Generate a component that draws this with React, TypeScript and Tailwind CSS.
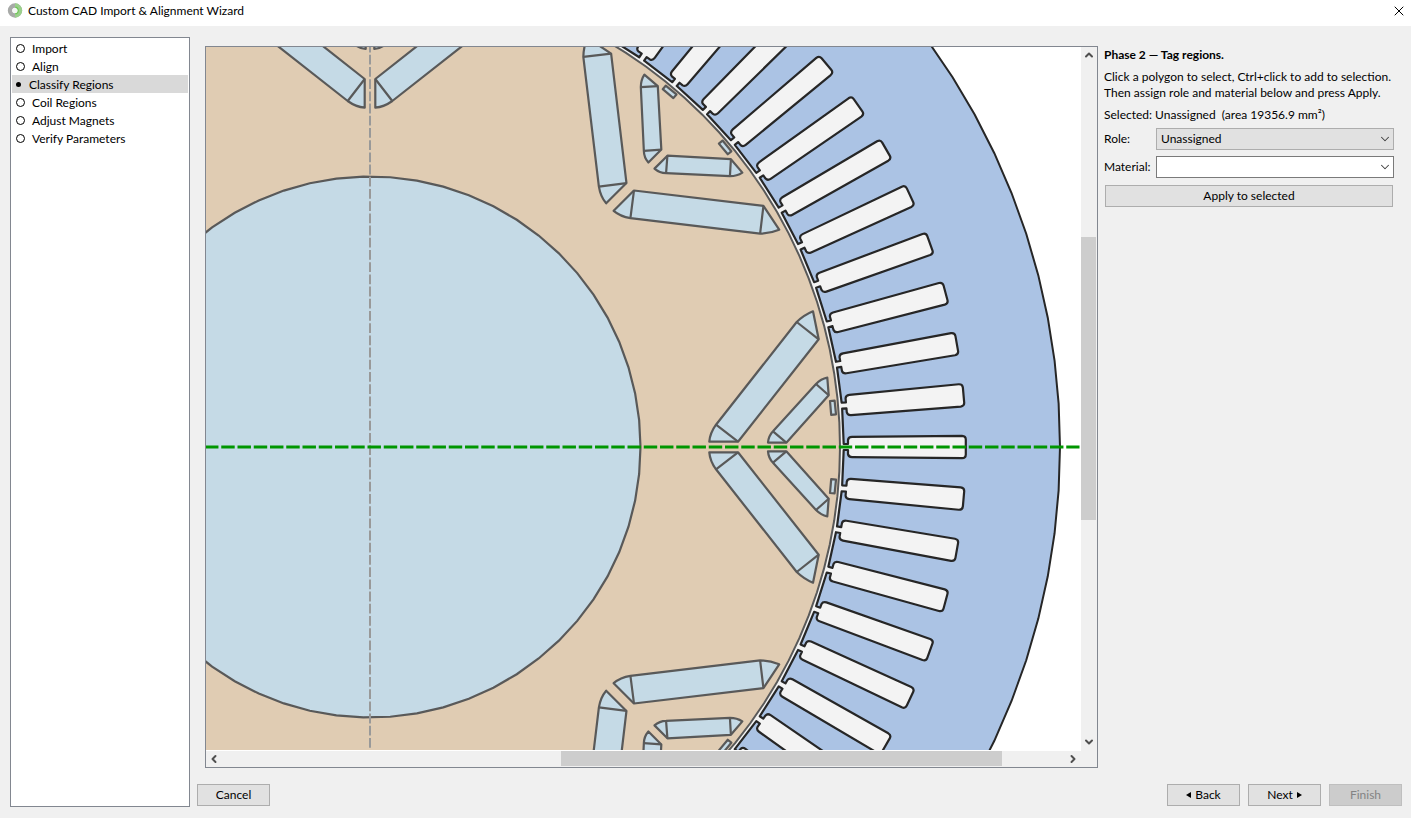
import React from 'react';
import { ChevronDown, ChevronLeft, ChevronRight, ChevronUp, X } from 'lucide-react';

const STEPS = ['Import', 'Align', 'Classify Regions', 'Coil Regions', 'Adjust Magnets', 'Verify Parameters'];
const ACTIVE_STEP = 2;

const SLOT_COUNT = 72;
const POLE_COUNT = 8;

const LARGE_MAGNET = {
  outline: 'M339.3 -5.3 L368 -5.3 L448.7 -107.7 L443 -135.7 Q434 -132 426.7 -125 L346 -22.3 Q340 -14 339.3 -5.3 Z',
  seams: 'M368 -5.3 L346 -22.3 M448.7 -107.7 L426.7 -125'
};

const SMALL_MAGNET = {
  outline: 'M398 -4.3 L416.3 -4.3 L458.7 -51.7 L457.3 -69.3 Q451 -68 446 -63 L403 -15.7 Q398.5 -11 398 -4.3 Z',
  seams: 'M416.3 -4.3 L403 -15.7 M458.7 -51.7 L446 -63'
};

const NOTCH = 'M460 -46 L464.6 -46.4 L466 -32.6 L461.2 -32.2 Z';

const polar = (radius: number, degrees: number) => {
  const angle = (degrees * Math.PI) / 180;
  return [radius * Math.cos(angle), -radius * Math.sin(angle)] as const;
};

const ring = (radius: number, segments: number) =>
  Array.from({ length: segments }, (_, i) => polar(radius, (i * 360) / segments).join(',')).join(' ');

const range = (count: number) => Array.from({ length: count }, (_, i) => i);

// Bore of the stator with every slot cut into it, as one closed outline.
const buildBorePath = () => {
  const place = (x: number, y: number, degrees: number) => {
    const a = (degrees * Math.PI) / 180;
    return `${(x * Math.cos(a) - y * Math.sin(a)).toFixed(2)} ${(x * Math.sin(a) + y * Math.cos(a)).toFixed(2)}`;
  };
  const parts = range(SLOT_COUNT).map((i) => {
    const d = (i * 360) / SLOT_COUNT;
    const p = (x: number, y: number) => place(x, y, d);
    return [
      `${i === 0 ? 'M' : 'L'}${p(473.7, -3)}`,
      `L${p(478, -3)}`,
      `L${p(478, -7)}`,
      `Q${p(478.4, -10)} ${p(482, -10.1)}`,
      `L${p(592, -11.2)}`,
      `Q${p(595.8, -11)} ${p(595.8, -7.5)}`,
      `L${p(595.8, 7.5)}`,
      `Q${p(595.8, 11)} ${p(592, 11.2)}`,
      `L${p(482, 10.1)}`,
      `Q${p(478.4, 10)} ${p(478, 7)}`,
      `L${p(478, 3)}`,
      `L${p(473.7, 3)}`
    ].join(' ');
  });
  return `${parts.join(' ')} Z`;
};

const BORE_PATH = buildBorePath();

const PoleHalf: React.FC<{ mirrored?: boolean }> = ({ mirrored = false }) => (
  <g transform={mirrored ? 'scale(1 -1)' : undefined} fill="#c5dae6" stroke="#595959" strokeWidth="2.2" strokeLinejoin="round">
    <path d={LARGE_MAGNET.outline} />
    <path d={LARGE_MAGNET.seams} />
    <path d={SMALL_MAGNET.outline} />
    <path d={SMALL_MAGNET.seams} />
    <path d={NOTCH} />
  </g>
);

const MotorDrawing: React.FC = () => (
  <svg className="block h-full w-full" viewBox="206 47 875 703" preserveAspectRatio="xMinYMin slice" role="img">
    <rect x="0" y="0" width="2400" height="1800" fill="#ffffff" />
    <g transform="translate(370 447)">
      <polygon points={ring(690, 100)} fill="#abc3e4" stroke="#262626" strokeWidth="2" />
      <path d={BORE_PATH} fill="#f3f3f3" stroke="#262626" strokeWidth="2.2" strokeLinejoin="round" />
      <polygon points={ring(470, 120)} fill="#e0ccb3" stroke="#595959" strokeWidth="2" />
      {range(POLE_COUNT).map((pole) => (
        <g key={pole} transform={`rotate(${(pole * 360) / POLE_COUNT})`}>
          <PoleHalf />
          <PoleHalf mirrored />
        </g>
      ))}
      <polygon points={ring(270.5, 63)} fill="#c5dae6" stroke="#595959" strokeWidth="2.2" />
    </g>
    <line x1="370" y1="42.6" x2="370" y2="750" stroke="#999999" strokeWidth="2" strokeDasharray="9.8 2.4" />
    <line x1="205" y1="447" x2="1079.5" y2="447" stroke="#009600" strokeWidth="2.8" strokeDasharray="13.45 2.8" />
  </svg>
);

const ScrollArrow: React.FC<{ label: string; children: React.ReactNode }> = ({ label, children }) => (
  <button type="button" aria-label={label} className="flex h-4 w-4 shrink-0 items-center justify-center text-[#505050]">
    {children}
  </button>
);

const Viewport: React.FC = () => (
  <section className="grid min-h-0 flex-1 grid-cols-[1fr_16px] grid-rows-[1fr_17px] border border-[#828790]">
    <div className="min-h-0 overflow-hidden">
      <MotorDrawing />
    </div>
    <div className="flex flex-col bg-[#f0f0f0]">
      <ScrollArrow label="Scroll up">
        <ChevronUp size={12} strokeWidth={4} />
      </ScrollArrow>
      <div className="flex flex-1 flex-col">
        <div className="grow-[174]" />
        <div className="mr-px grow-[283] bg-[#cdcdcd]" />
        <div className="grow-[214]" />
      </div>
      <ScrollArrow label="Scroll down">
        <ChevronDown size={12} strokeWidth={4} />
      </ScrollArrow>
    </div>
    <div className="flex border-t border-white bg-[#f0f0f0]">
      <ScrollArrow label="Scroll left">
        <ChevronLeft size={12} strokeWidth={4} />
      </ScrollArrow>
      <div className="flex flex-1">
        <div className="grow-[339]" />
        <div className="mb-px grow-[441] bg-[#cdcdcd]" />
        <div className="grow-[63]" />
      </div>
      <ScrollArrow label="Scroll right">
        <ChevronRight size={12} strokeWidth={4} />
      </ScrollArrow>
    </div>
    <div className="bg-[#f0f0f0]" />
  </section>
);

const WizardButton: React.FC<{ disabled?: boolean; children: React.ReactNode }> = ({ disabled, children }) => (
  <button
    type="button"
    disabled={disabled}
    className="flex h-[22px] w-[73px] items-center justify-center gap-1 border border-[#adadad] bg-[#e1e1e1] disabled:border-[#bfbfbf] disabled:bg-[#cccccc] disabled:text-[#838383]"
  >
    {children}
  </button>
);

const StepList: React.FC = () => (
  <nav className="w-[180px] shrink-0 border border-[#828790] bg-white px-px pt-px">
    <ol>
      {STEPS.map((step, index) => {
        const active = index === ACTIVE_STEP;
        return (
          <li
            key={step}
            aria-current={active ? 'step' : undefined}
            className={`flex h-[18px] items-center px-1 pt-px ${active ? 'gap-2 bg-[#d9d9d9]' : 'gap-[7px]'}`}
          >
            {active ? (
              <span className="h-[5px] w-[5px] rounded-full bg-black" />
            ) : (
              <span className="h-[9px] w-[9px] rounded-full border border-black" />
            )}
            {step}
          </li>
        );
      })}
    </ol>
  </nav>
);

const TagPanel: React.FC = () => {
  const [role, setRole] = React.useState('Unassigned');
  const [material, setMaterial] = React.useState('');

  return (
    <aside className="flex w-[298px] shrink-0 flex-col pt-px pr-2">
      <h1 className="font-bold">Phase 2 — Tag regions.</h1>
      <p className="mt-[6px] whitespace-nowrap">
        Click a polygon to select, Ctrl+click to add to selection.
        <br />
        Then assign role and material below and press Apply.
      </p>
      <p className="mt-[6px] whitespace-pre">{'Selected: Unassigned  (area 19356.9 mm²)'}</p>
      <div className="mt-[5px] grid grid-cols-[52px_1fr] items-center gap-y-[6px]">
        <label htmlFor="role">Role:</label>
        <div className="relative">
          <select
            id="role"
            value={role}
            onChange={(e) => setRole(e.target.value)}
            className="block h-[22px] w-full appearance-none border border-[#adadad] bg-[#e1e1e1] px-1"
          >
            <option>Unassigned</option>
          </select>
          <ChevronDown size={14} strokeWidth={1.8} className="pointer-events-none absolute top-1 right-[2px] text-[#404040]" />
        </div>
        <label htmlFor="material">Material:</label>
        <div className="relative">
          <select
            id="material"
            value={material}
            onChange={(e) => setMaterial(e.target.value)}
            className="block h-[22px] w-full appearance-none border border-[#7a7a7a] bg-white px-1"
          >
            <option value="" />
          </select>
          <ChevronDown size={14} strokeWidth={1.8} className="pointer-events-none absolute top-1 right-[2px] text-[#404040]" />
        </div>
      </div>
      <button type="button" className="mt-[7px] mr-px ml-px h-[22px] border border-[#adadad] bg-[#e1e1e1]">
        Apply to selected
      </button>
    </aside>
  );
};

const AppLogo: React.FC = () => (
  <svg width="16" height="16" viewBox="0 0 16 16" aria-hidden="true">
    <circle cx="8" cy="7.5" r="5" fill="none" stroke="#a8aaa8" strokeWidth="4.4" />
    <path d="M8 2.5 A5 5 0 0 1 8 12.5" fill="none" stroke="#9bd08c" strokeWidth="4.4" />
    <path d="M8.5 4.2 A3.4 3.4 0 0 1 8.5 10.8" fill="none" stroke="#6cc653" strokeWidth="1.4" />
    <circle cx="8" cy="7.5" r="2.6" fill="#f4f8f4" />
  </svg>
);

export default function App() {
  return (
    <div className="flex h-screen flex-col bg-[#f0f0f0] font-['Lato','Noto_Sans',sans-serif] text-[12px] leading-4 text-black">
      <header className="flex h-[26px] shrink-0 items-start justify-between bg-white pt-[3px] pr-1 pl-[7px]">
        <div className="flex items-center gap-[5px]">
          <AppLogo />
          <span>Custom CAD Import &amp; Alignment Wizard</span>
        </div>
        <button type="button" aria-label="Close">
          <X size={16} strokeWidth={1.5} />
        </button>
      </header>
      <div className="flex min-h-0 flex-1 gap-[7px] pt-[11px] pr-[9px] pb-[11px] pl-[10px]">
        <StepList />
        <main className="flex min-w-0 flex-1 flex-col pb-px">
          <div className="flex min-h-0 flex-1 gap-[6px] pt-[9px] pl-2">
            <Viewport />
            <TagPanel />
          </div>
          <footer className="mt-4 flex items-center gap-2">
            <WizardButton>Cancel</WizardButton>
            <div className="flex-1" />
            <WizardButton>
              <svg width="5" height="6" viewBox="0 0 5 6" aria-hidden="true">
                <path d="M5 0 L0 3 L5 6 Z" />
              </svg>
              Back
            </WizardButton>
            <WizardButton>
              Next
              <svg width="5" height="6" viewBox="0 0 5 6" aria-hidden="true">
                <path d="M0 0 L5 3 L0 6 Z" />
              </svg>
            </WizardButton>
            <WizardButton disabled>Finish</WizardButton>
          </footer>
        </main>
      </div>
    </div>
  );
}
